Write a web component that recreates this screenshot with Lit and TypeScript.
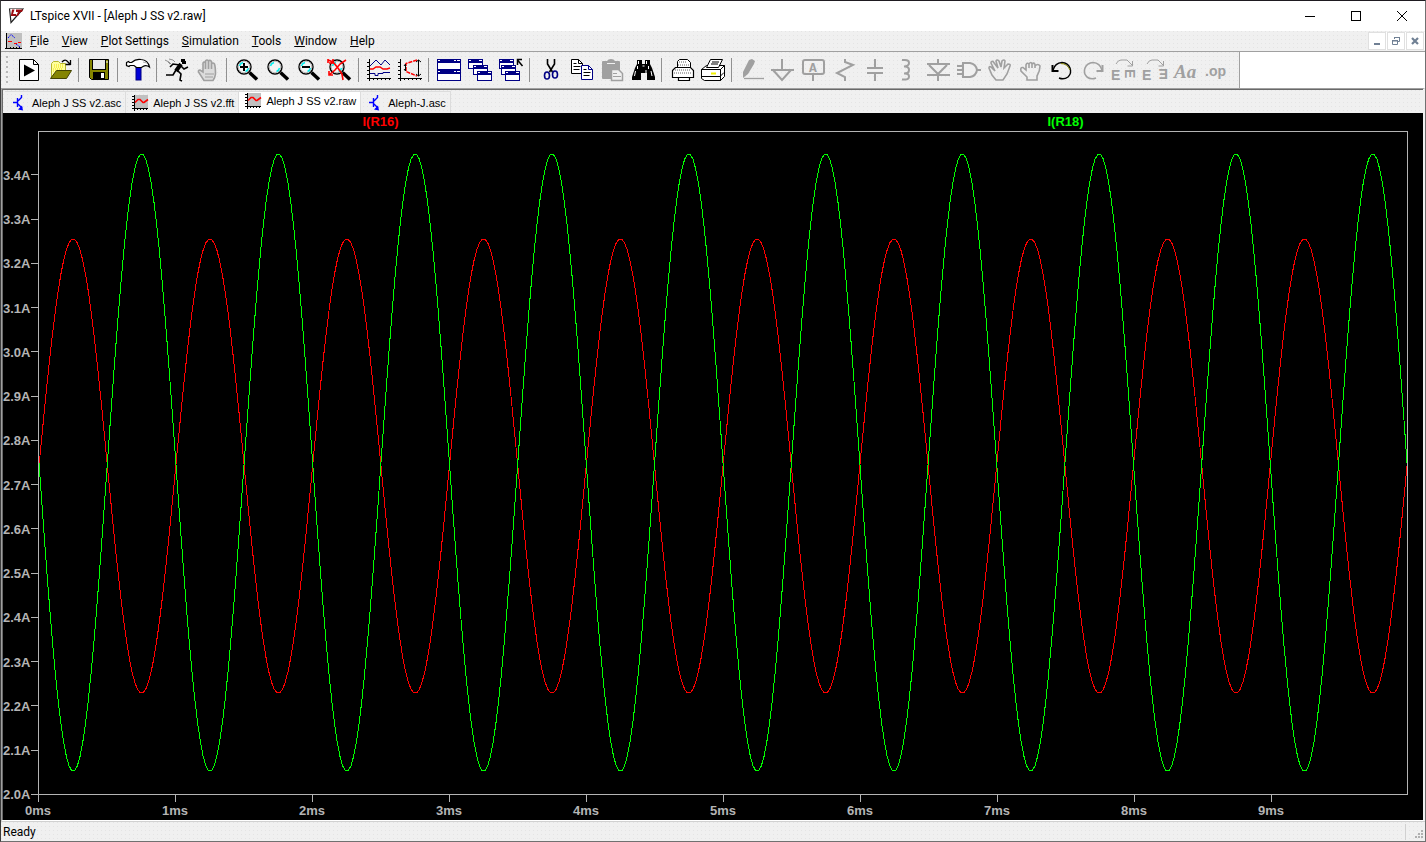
import {html, css, svg, LitElement, TemplateResult} from 'lit';
import {customElement, property, state} from 'lit/decorators.js';
import {classMap} from 'lit/directives/class-map.js';

const GREY = '#a0a0a0';
const NAVY = '#000084';

const lens = (inner: TemplateResult) => svg`
  <path d="M14.500 14.500L22 21.500" stroke="#000" stroke-width="3.500"/>
  <circle cx="9" cy="9" r="7" fill="#f4f4f4" stroke="#000" stroke-width="1.400"/>
  <circle cx="9" cy="9" r="5.800" fill="none" stroke="#b8b8b8"/>
  <path d="M4.500 8Q5 5.500 8 4.500M13.500 10Q13 12.500 10.500 13.500" fill="none" stroke="#00f0f0" stroke-width="1.400"/>
  ${inner}`;

const smallWindow = (x: number, y: number) => svg`
  <rect x=${x + 0.5} y=${y + 0.5} width="14" height="9" fill="#fff" stroke=${NAVY}/>
  <rect x=${x} y=${y} width="15" height="4" fill=${NAVY}/>
  <path d="M${x + 1} ${y + 1.5}h2M${x + 11} ${y + 1.5}h3" stroke="#fff"/>`;

const wideWindow = (y: number) => svg`
  <rect x=".5" y=${y + 0.5} width="23" height="10" fill="#fff" stroke=${NAVY}/>
  <rect x="0" y=${y} width="24" height="4" fill=${NAVY}/>
  <path d="M1 ${y + 1.5}h2M17 ${y + 1.5}h2M20 ${y + 1.5}h3" stroke="#fff"/>`;

const sheet = (x: number, y: number, line: string) => svg`
  <path d="M${x} ${y}h7l4 4v10h-11z" fill="#fff" stroke=${line}/>
  <path d="M${x + 7} ${y}v4h4" fill="none" stroke=${line}/>
  <path d="M${x + 2} ${y + 4}h3M${x + 2} ${y + 7}h7M${x + 2} ${y + 10}h6" stroke="#000"/>`;

const icons: Record<string, TemplateResult> = {
  run: svg`
    <path d="M2.500 1.500h14l5 5v16h-19z" fill="#fff" stroke="#000"/>
    <path d="M16.500 1.500v5h5" fill="none" stroke="#000"/>
    <path d="M7 6.500v12l11-6z" fill="#000"/>`,
  open: svg`
    <path d="M3.500 20V5.500l2-2h5l2 2h5V13" fill="#ffff9c" stroke="#b5b52a"/>
    <path d="M6 7h10M6 9h10M5 11h10M5 13h3" stroke="#f0e000" stroke-dasharray="1 1"/>
    <path d="M2.500 20.500L8.500 12.500H23.500L18.500 20.500z" fill="#848400" stroke="#424200"/>
    <path d="M14 4Q16 1.500 18.500 2.500L22 6M22.500 2v5M22.500 6.500h-5" fill="none" stroke="#000" stroke-width="1.300"/>`,
  save: svg`
    <path d="M2.500 1.500h19v20h-17l-2-2z" fill="#848400" stroke="#000"/>
    <rect x="5.500" y="1.500" width="13" height="10" fill="#e8e8e8" stroke="#000"/>
    <rect x="6" y="14" width="12" height="7" fill="#000"/><rect x="14" y="15" width="3" height="5" fill="#fff"/>
    <path d="M20 3v2" stroke="#fff"/>`,
  hammer: svg`
    <rect x="10" y="9" width="5" height="13" fill="#0000d8" stroke="#000084"/>
    <path d="M.5 4.500l2-1 1 1h2Q10 .5 15 1.500Q22 2 23.500 9Q20 6.500 17 8.500L15.500 9.500h-5L8 7.500H4l-1 1-2.500-1z" fill="#fff" stroke="#000" stroke-width="1.200"/>
    <path d="M17 4l4 1" stroke="#b0b0b0"/>`,
  runner: svg`
    <path d="M16 1h4v2h1v3h-4V4h-1z"/>
    <path d="M16 6L11 13" stroke="#000" stroke-width="4"/>
    <path d="M15 7L8 6L5 9M16 8l3 3 4-2M11 12L8 17L1 17M12 12l4 4-1 6 2 1" fill="none" stroke="#000" stroke-width="1.600"/>
    <path d="M0 2l4 2 2 2M4 1l4 1 2 2M5 6l-2-2" fill="none" stroke="#909090"/>`,
  stop: svg`
    <path d="M8 22.500L2.500 14Q2 12 4 12L7 14V5Q8 3 9.500 5V11V3Q11 1 12.500 3V11V3Q14 1.500 15.500 3.500V11V6Q17 4 18.500 6Q19.500 9 19.500 16Q19 20 17 22.500z" fill="#dcdcdc" stroke=${GREY} stroke-width="1.600"/>
    <path d="M9 16h9M9 19h8" stroke=${GREY}/>`,
  zoomIn: lens(svg`<path d="M9 5v8M5 9h8" stroke="#000" stroke-width="2"/>`),
  pan: lens(svg``),
  zoomOut: lens(svg`<path d="M5 9h8" stroke="#000" stroke-width="2"/>`),
  zoomFit: svg`
    ${lens(svg``)}
    <path d="M0 2l5 2 5 6 4 6M18 2l-6 4-5 6-6 5M0 1v4M5 1v4H1M14 16l1 6M1 13v4h4" fill="none" stroke="#f00" stroke-width="1.600"/>`,
  plots: svg`
    <path d="M2.500 1v22M0 20.500h24M0 4.500h2M0 8.500h2M0 12.500h2M0 16.500h2M6.500 21v1M10.500 21v1M14.500 21v1M18.500 21v1M22.500 21v1" stroke="#000"/>
    <path d="M3 8l6-6 5 5 4-5 5 5M3 15.500h5v2h3v-2h5v-1h7" fill="none" stroke=${NAVY}/>
    <path d="M3 11h3l3-2h4l3 2h4l3-1" fill="none" stroke="#f00" stroke-width="1.500"/>`,
  eye: svg`
    <path d="M2.500 1v22M0 20.500h24M0 4.500h2M0 8.500h2M0 12.500h2M0 16.500h2M6.500 21v1M10.500 21v1M14.500 21v1M18.500 21v1M22.500 21v1" stroke="#000"/>
    <path d="M19 2L8 5.500v8L19 18" fill="none" stroke="#f00" stroke-width="1.500" stroke-dasharray="4 1"/>
    <path d="M20.500 2v16M18 4l2.500-2 2.500 2M18 16l2.500 2 2.500-2M7.500 6v7M6 8l1.500-2M6 11l1.500 2" fill="none" stroke="#000"/>`,
  tile: svg`${wideWindow(1)}${wideWindow(12)}`,
  cascade: svg`${smallWindow(0, 1)}${smallWindow(5, 7)}${smallWindow(9, 13)}`,
  closeAll: svg`${smallWindow(0, 1)}${smallWindow(2, 7)}${smallWindow(6, 13)}
    <path d="M23.500 8L18.500 2M18.500 7V1.500H23" fill="none" stroke="#000" stroke-width="1.500"/>`,
  cut: svg`
    <path d="M9.500 1v5l5 8M16.500 1v5l-5 8" fill="none" stroke="#000" stroke-width="1.600"/>
    <ellipse cx="9" cy="17.500" rx="2.500" ry="3.500" fill="none" stroke=${NAVY} stroke-width="1.600"/>
    <ellipse cx="17" cy="16.500" rx="2.500" ry="3.500" fill="none" stroke=${NAVY} stroke-width="1.600"/>`,
  copy: svg`${sheet(2.5, 1.5, '#000')}${sheet(12.5, 7.5, NAVY)}`,
  paste: svg`
    <path d="M2 4q0-1 1-1h4q1-2 4-2t4 2h4q1 0 1 1v16q0 1-1 1H3q-1 0-1-1z" fill=${GREY}/>
    <path d="M7 5.500h8" stroke="#f0f0f0"/>
    <path d="M11.500 11.500h7l4 4v7h-11z" fill="#f0f0f0" stroke=${GREY} stroke-width="1.500"/>
    <path d="M13 15.500h4M13 18.500h8" stroke=${GREY}/>`,
  find: svg`
    <path d="M6 2h5v4h3V2h5v4l2 4 3 9v3h-8v-7h-6v7H1v-3l3-9 2-4z"/>
    <path d="M7.500 3v3M15.500 3v3M6.500 8v3M17.500 8v3M4.500 13l-1 5M15 12v3M20 13l1 5M11.500 8h2" stroke="#fff"/>`,
  print: svg`
    <path d="M7.500 10V3.500l2-2h8l3 3V10" fill="#fff" stroke="#000"/>
    <path d="M2.500 12.500l3-3h15l3 3v7h-4v3h-11v-3h-6z" fill="#fff" stroke="#000" stroke-width="1.200"/>
    <path d="M9 4h8M8 7h11M5 12h16M4 15h18" stroke="#b0b0b0" stroke-dasharray="1 1" stroke-width="2"/>
    <path d="M8 19.500h12" stroke="#000"/>`,
  setup: svg`
    <path d="M.5 11.500l5-4h18l-4 4z" fill="#fff" stroke="#000"/>
    <path d="M5.500 9.500l4-8h12l-4 8z" fill="#fff" stroke="#000"/>
    <path d="M11 4h7M10 6h7" stroke="#000"/>
    <path d="M.5 11.500h19v11h-16l-3-2zM19.500 11.500l4-4v11l-4 4z" fill="#fff" stroke="#000"/>
    <path d="M1 18.500h18l4-4" fill="none" stroke="#000"/>
    <path d="M10 15.500h5" stroke="#f0f000" stroke-width="2"/>`,
  wire: svg`
    <path d="M3 20V14L9 2l3-1 3 2-1 3L8 16z" fill=${GREY}/>
    <path d="M4 20.500h20" stroke=${GREY} stroke-width="1.300"/>`,
  ground: svg`<path d="M11 1v11M0 12h23M2 12l9 10 9-10" fill="none" stroke=${GREY} stroke-width="2"/>`,
  label: svg`
    <rect x="1" y="2" width="21" height="14" rx="2" fill="none" stroke=${GREY} stroke-width="2"/>
    <path d="M11 16v7" stroke=${GREY} stroke-width="2"/>
    <text class="glyph mono" x="11" y="14" text-anchor="middle">A</text>`,
  resistor: svg`<path d="M12 1v3l8 3L4 15l8 4v4" fill="none" stroke=${GREY} stroke-width="2"/>`,
  capacitor: svg`<path d="M11 1v9M3 10h16M3 15h16M11 15v8" fill="none" stroke=${GREY} stroke-width="2"/>`,
  inductor: svg`<path d="M7 2h3q4 0 4 3t-5 3.500h1q4 0 4 3.500t-5 3.500h1q4 0 4 3t-4 3H7" fill="none" stroke=${GREY} stroke-width="2"/>`,
  diode: svg`<path d="M12 1v5M1 6h23M3 7l9 9 9-9M1 17h23M12 17v6" fill="none" stroke=${GREY} stroke-width="2"/>`,
  gate: svg`<path d="M0 12h6M0 8h6M0 16h6M19 12h5M6 5h7q6 1 7 7q-1 6-7 7H6z" fill="#f0f0f0" stroke=${GREY} stroke-width="2"/>`,
  move: svg`
    <path d="M8 22L4 17L1 10Q1 8 3 9L7 13L3 5Q3 3 5 3.500L10 10L8 3Q9 1 11 3L13 9L14 3Q16 1 17 3L16 10L20 6Q23 6 22 8L19 16L15 22z" fill="none" stroke=${GREY} stroke-width="1.600"/>`,
  drag: svg`
    <path d="M8 22V19L2 13Q1 9 4 9.500L7 12V7Q8 4 10 6V10V6Q12 3 13 6V10V6Q15 4 16 6.500V10V8Q19 5 21 8Q21 13 18 18V22z" fill="none" stroke=${GREY} stroke-width="1.600"/>`,
  undo: svg`
    <path d="M3 12Q5 5 12 4.500Q18 5 20 10Q22 15 18 19Q14 22 9 20" fill="none" stroke="#000" stroke-width="1.400"/>
    <path d="M11 5.500Q17 5.500 20 12" fill="none" stroke="#848400"/>
    <path d="M2.500 7v6h6" fill="none" stroke="#000" stroke-width="2"/>`,
  redo: svg`
    <path d="M21 12Q19 5 12 4.500Q6 5 4 10Q2 15 6 19Q10 22 15 20" fill="none" stroke=${GREY} stroke-width="1.600"/>
    <path d="M21.500 7v6h-6" fill="none" stroke=${GREY} stroke-width="2"/>`,
  rotate: svg`
    <path d="M4 6q2-4 5-4h6l5 5M20.500 3v5h-5" fill="none" stroke=${GREY}/>
    <text class="glyph" x="-1" y="22">E</text>
    <text class="glyph" transform="translate(13 11) rotate(90)">E</text>`,
  mirror: svg`
    <path d="M4 6q2-4 5-4h6l5 5M20.500 3v5h-5" fill="none" stroke=${GREY}/>
    <text class="glyph" x="-1" y="22">E</text>
    <text class="glyph" transform="translate(25 11) rotate(180)">E</text>`,
  text: svg`<text class="glyph script" x="0" y="20">Aa</text>`,
  directive: svg`<text class="glyph" x="0" y="18">.op</text>`,
};

// null marks a separator
const tools: (null | [string, string, boolean?])[] = [
  ['run', 'Run'], ['open', 'Open'], null,
  ['save', 'Save'], null,
  ['hammer', 'Control Panel'], null,
  ['runner', 'Run simulation'], ['stop', 'Halt', true], null,
  ['zoomIn', 'Zoom to rectangle'], ['pan', 'Pan'], ['zoomOut', 'Zoom back'], ['zoomFit', 'Zoom full extents'], null,
  ['plots', 'Autorange'], ['eye', 'Pick visible traces'], null,
  ['tile', 'Tile windows'], ['cascade', 'Cascade windows'], ['closeAll', 'Close all windows'], null,
  ['cut', 'Cut'], ['copy', 'Copy'], ['paste', 'Paste', true], ['find', 'Find'], null,
  ['print', 'Print'], ['setup', 'Print setup'], null,
  ['wire', 'Wire', true], ['ground', 'Ground', true], ['label', 'Label net', true],
  ['resistor', 'Resistor', true], ['capacitor', 'Capacitor', true], ['inductor', 'Inductor', true],
  ['diode', 'Diode', true], ['gate', 'Component', true], ['move', 'Move', true], ['drag', 'Drag', true],
  ['undo', 'Undo'], ['redo', 'Redo', true], ['rotate', 'Rotate', true], ['mirror', 'Mirror', true],
  ['text', 'Text', true], ['directive', 'SPICE directive', true],
];

const schematicIcon = svg`
  <path d="M2 7.500h4M6.500 3v9M7 6L10.500 2.500V0M7 9l4 4" fill="none" stroke="#00f" stroke-width="1.400"/>
  <path d="M12 15.500l-5-1 4-4z" fill="#00f"/>`;

const waveIcon = svg`
  <rect x="2" y="0" width="14" height="13" fill="#c0c0c0"/>
  <path d="M2.500 0v16M0 13.500h16M0 1.500h2M0 4.500h2M0 7.500h2M0 10.500h2M5.500 14v1M8.500 14v1M11.500 14v1M14.500 14v1" stroke="#000"/>
  <path d="M3 7.500l3-3h2l3 3h1l4-3" fill="none" stroke="#f00" stroke-width="1.600"/>`;

const documents = [
  {name: 'Aleph J SS v2.asc', icon: schematicIcon},
  {name: 'Aleph J SS v2.fft', icon: waveIcon},
  {name: 'Aleph J SS v2.raw', icon: waveIcon},
  {name: 'Aleph-J.asc', icon: schematicIcon},
];

const menus = ['File', 'View', 'Plot Settings', 'Simulation', 'Tools', 'Window', 'Help'];

interface Trace {
  name: string;
  color: string;
  mean: number;
  peak: number;
}

const traces: Trace[] = [
  {name: 'I(R16)', color: '#ff0000', mean: 2.743, peak: 0.515},
  {name: 'I(R18)', color: '#00ff00', mean: 2.751, peak: -0.7},
];

const Y_MAX = 3.5;
const Y_MIN = 2.0;
const SPAN_MS = 10;

// one unit is 1us across and 1mA down
function trace_points(t: Trace) {
  const pts: string[] = [];
  for (let us = 0; us <= SPAN_MS * 1000; us += 20) {
    const amps = t.mean + t.peak * Math.sin(2 * Math.PI * us / 1000);
    pts.push(us + ',' + ((Y_MAX - amps) * 1000).toFixed(1));
  }
  return pts.join(' ');
}

@customElement('wave-plot')
class WavePlot extends LitElement {
  @property({attribute: false}) traces: Trace[] = [];

  static styles = css`
:host {
  display: grid;
  grid-template-columns: 35px minmax(0, 1fr) 15px;
  grid-template-rows: 18px minmax(0, 1fr) 25px;
  background: #000;
  color: #b4b4b4;
  font: bold 13px "Liberation Sans", Arial, sans-serif;
  min-height: 0;
}
ul, ol {
  list-style: none;
  margin: 0;
  padding: 0;
}
.legend {
  grid-column: 2;
  display: flex;
}
.legend li {
  flex: 1;
  text-align: center;
  line-height: 18px;
}
/* labels sit centred on the lower edge of their row */
.y-axis {
  grid-area: 2 / 1;
  display: flex;
  flex-direction: column;
}
.y-axis li {
  flex: 1 1 0;
  min-height: 0;
  display: flex;
  justify-content: flex-end;
  align-items: flex-end;
  gap: 1px;
}
.y-axis span {
  display: flex;
  align-items: center;
  height: 0;
}
.y-axis li::after {
  content: "";
  width: 7px;
  height: 1px;
  background: #b4b4b4;
}
.frame {
  grid-area: 2 / 2;
  border: 1px solid #b4b4b4;
  min-height: 0;
}
.frame svg {
  display: block;
  width: 100%;
  height: 100%;
  overflow: visible;
}
polyline {
  fill: none;
  stroke-width: 1px;
  vector-effect: non-scaling-stroke;
  shape-rendering: crispEdges;
}
.x-axis {
  grid-area: 3 / 2;
  display: flex;
}
.x-axis li {
  flex: 1 1 0;
  min-width: 0;
}
.x-axis li::before {
  content: "";
  display: block;
  width: 1px;
  height: 7px;
  background: #b4b4b4;
}
.x-axis span {
  display: flex;
  justify-content: center;
  width: 0;
  line-height: 18px;
}
  `;

  render() {
    const rows = Math.round((Y_MAX - Y_MIN) * 10);
    return html`
      <ul class="legend">
        ${this.traces.map(t => html`<li style="color: ${t.color}">${t.name}</li>`)}
      </ul>
      <ol class="y-axis">
        ${Array.from({length: rows}, (_, i) => html`<li><span>${(Y_MAX - (i + 1) / 10).toFixed(1)}A</span></li>`)}
      </ol>
      <div class="frame">
        <svg viewBox="0 0 ${SPAN_MS * 1000} ${(Y_MAX - Y_MIN) * 1000}" preserveAspectRatio="none" role="img" aria-label="Resistor currents over time">
          ${this.traces.map(t => svg`<polyline points=${trace_points(t)} stroke=${t.color}/>`)}
        </svg>
      </div>
      <ol class="x-axis">
        ${Array.from({length: SPAN_MS}, (_, i) => html`<li><span>${i}ms</span></li>`)}
      </ol>`;
  }
}

@customElement('app-root')
class AppRoot extends LitElement {
  @state() active = 2;

  static styles = css`
:host {
  display: flex;
  flex-direction: column;
  box-sizing: border-box;
  height: 100vh;
  border: 1px solid #707070;
  border-top-color: #1e1a20;
  border-left-color: #3c3c3c;
  background: #fff;
  color: #000;
  font: 12px Roboto, "Segoe UI", sans-serif;
  overflow: hidden;
}
button {
  border: 0;
  margin: 0;
  padding: 0;
  background: none;
  color: inherit;
  font: inherit;
}
svg {
  display: block;
  flex: none;
  overflow: visible;
}
.dither {
  background: conic-gradient(at 1px 1px, transparent 75%, #e4e4e4 0) 0 0 / 4px 4px #f0f0f0;
}
.title-bar {
  display: flex;
  align-items: center;
  height: 30px;
  padding-left: 7px;
}
h1 {
  flex: 1;
  margin: 0 0 0 6px;
  font: inherit;
}
.window-button {
  display: flex;
  align-items: center;
  justify-content: center;
  width: 46px;
  height: 30px;
}
.menu-bar {
  display: flex;
  align-items: center;
  height: 20px;
  border-bottom: 1px solid #a0a0a0;
  padding-left: 4px;
}
.menus {
  display: flex;
  flex: 1;
  gap: 13px;
  padding-left: 8px;
}
.mdi {
  display: flex;
  gap: 1px;
  padding-right: 1px;
  background: #fff;
}
.mdi button {
  display: flex;
  align-items: center;
  justify-content: center;
  box-sizing: border-box;
  width: 18px;
  height: 18px;
  border: 1px solid #e0e0e0;
  background: #fff;
}
.tool-row {
  display: flex;
  height: 36px;
}
.tools {
  display: flex;
  align-items: center;
  border-right: 1px solid #a0a0a0;
  padding: 0 6px 0 5px;
}
.grip {
  width: 3px;
  height: 28px;
  margin-right: 5px;
  background: conic-gradient(at 2px 2px, transparent 75%, #b8b8b8 0) 0 0 / 4px 5px;
}
.tools button {
  padding: 0 4px 0 3px;
}
.separator {
  width: 1px;
  height: 24px;
  margin: 0 5px 0 2px;
  background: #909090;
}
.glyph {
  fill: #a0a0a0;
  font: bold 14px "Liberation Sans", Arial, sans-serif;
}
.glyph.mono {
  font: bold 13px "Liberation Mono", "Courier New", monospace;
}
.glyph.script {
  font: italic bold 19px "Liberation Serif", "Times New Roman", serif;
}
.client {
  display: flex;
  flex-direction: column;
  flex: 1;
  min-height: 0;
  border-top: 1px solid #a0a0a0;
  border-left: 1px solid #a0a0a0;
  border-right: 2px solid #f0f0f0;
  border-bottom: 1px solid #fff;
}
.sunken {
  display: flex;
  flex-direction: column;
  flex: 1;
  min-height: 0;
  border-top: 1px solid #696969;
  border-left: 1px solid #696969;
}
.tabs {
  display: flex;
  height: 23px;
  padding: 1px 0 0 2px;
  box-sizing: border-box;
  font: 11px "Liberation Sans", Arial, sans-serif;
}
.tab {
  display: flex;
  align-items: center;
  gap: 5px;
  border-top: 1px solid #dcdcdc;
  border-right: 1px solid #dcdcdc;
  padding: 0 4px 0 6px;
}
.tab.active {
  background: #fff;
  padding-bottom: 4px;
}
wave-plot {
  flex: 1;
}
.status-bar {
  display: flex;
  align-items: center;
  height: 19px;
  border-top: 1px solid #d0d0d0;
  padding-left: 2px;
}
.message {
  flex: 1;
}
.corner {
  display: flex;
  align-items: flex-end;
  justify-content: flex-end;
  width: 19px;
  height: 16px;
  border-left: 1px solid #d0d0d0;
}
  `;

  render() {
    return html`
      <header class="title-bar">
        <svg width="16" height="16" viewBox="0 0 16 16">
          <path d="M1.500 .5L3 14.500L15 1" fill="none" stroke="#202020" stroke-width="1.200"/>
          <path d="M1 .5h15" stroke="#808080"/>
          <path d="M4 1.500h2.500L5 6H8v2H2.800zM8 1.500h7l-1 2.500h-2l-2 4H8l2-4H8z" fill="#9c0c10"/>
        </svg>
        <h1>LTspice XVII - [Aleph J SS v2.raw]</h1>
        <button class="window-button" aria-label="Minimize">
          <svg width="10" height="10" viewBox="0 0 10 10"><path d="M0 5.500h10" stroke="#000"/></svg>
        </button>
        <button class="window-button" aria-label="Maximize">
          <svg width="10" height="10" viewBox="0 0 10 10"><rect x=".5" y=".5" width="9" height="9" fill="none" stroke="#000"/></svg>
        </button>
        <button class="window-button" aria-label="Close">
          <svg width="10" height="10" viewBox="0 0 10 10"><path d="M0 0l10 10M10 0L0 10" stroke="#000"/></svg>
        </button>
      </header>
      <nav class="menu-bar dither">
        <svg width="17" height="17" viewBox="0 0 17 17">
          <rect x="2" y="0" width="15" height="15" fill="#c0c0c0"/>
          <path d="M1.500 0v16M0 15.500h17M5.500 14v2M8.500 14v2M11.500 14v2M14.500 14v2" stroke="#000"/>
          <path d="M3 5l3-3.500L10 5M11 11l4 3" fill="none" stroke="#00f" stroke-dasharray="2 1"/>
          <path d="M3 8.500h4M9 10.500h3M13 9.500h3" fill="none" stroke="#f00"/>
        </svg>
        <div class="menus">
          ${menus.map(m => html`<button><u>${m[0]}</u>${m.slice(1)}</button>`)}
        </div>
        <div class="mdi">
          <button aria-label="Minimize document">
            <svg width="10" height="10" viewBox="0 0 10 10"><path d="M2 8h6" stroke="#708094" stroke-width="2"/></svg>
          </button>
          <button aria-label="Restore document">
            <svg width="10" height="10" viewBox="0 0 10 10">
              <path d="M3.500 3V1.500h5v4H7M3 1.500h6M1.500 5h5v3.500h-5zM1 4.500h6" fill="none" stroke="#708094"/>
            </svg>
          </button>
          <button aria-label="Close document">
            <svg width="10" height="10" viewBox="0 0 10 10"><path d="M2 2l6 6M8 2L2 8" stroke="#708094" stroke-width="2.200"/></svg>
          </button>
        </div>
      </nav>
      <div class="tool-row">
        <div class="tools dither" role="toolbar" aria-label="Main">
          <div class="grip"></div>
          ${tools.map(t => t === null
            ? html`<div class="separator"></div>`
            : html`
              <button aria-label=${t[1]} ?disabled=${t[2]}>
                <svg width="24" height="24" viewBox="0 0 24 24">${icons[t[0]]}</svg>
              </button>`)}
        </div>
      </div>
      <main class="client">
        <div class="sunken">
          <div class="tabs dither" role="tablist">
            ${documents.map((d, i) => html`
              <button class=${classMap({tab: true, active: i === this.active})} role="tab"
                aria-selected=${i === this.active} @click=${() => {this.active = i}}>
                <svg width="16" height="16" viewBox="0 0 16 16">${d.icon}</svg>
                <span>${d.name}</span>
              </button>`)}
          </div>
          <wave-plot .traces=${traces}></wave-plot>
        </div>
      </main>
      <footer class="status-bar dither">
        <span class="message">Ready</span>
        <div class="corner">
          <svg width="10" height="10" viewBox="0 0 10 10">
            <path d="M6 1h2M3 4h2M6 4h2M0 7h2M3 7h2M6 7h2" stroke="#b0b0b0" stroke-width="2"/>
          </svg>
        </div>
      </footer>`;
  }
}
